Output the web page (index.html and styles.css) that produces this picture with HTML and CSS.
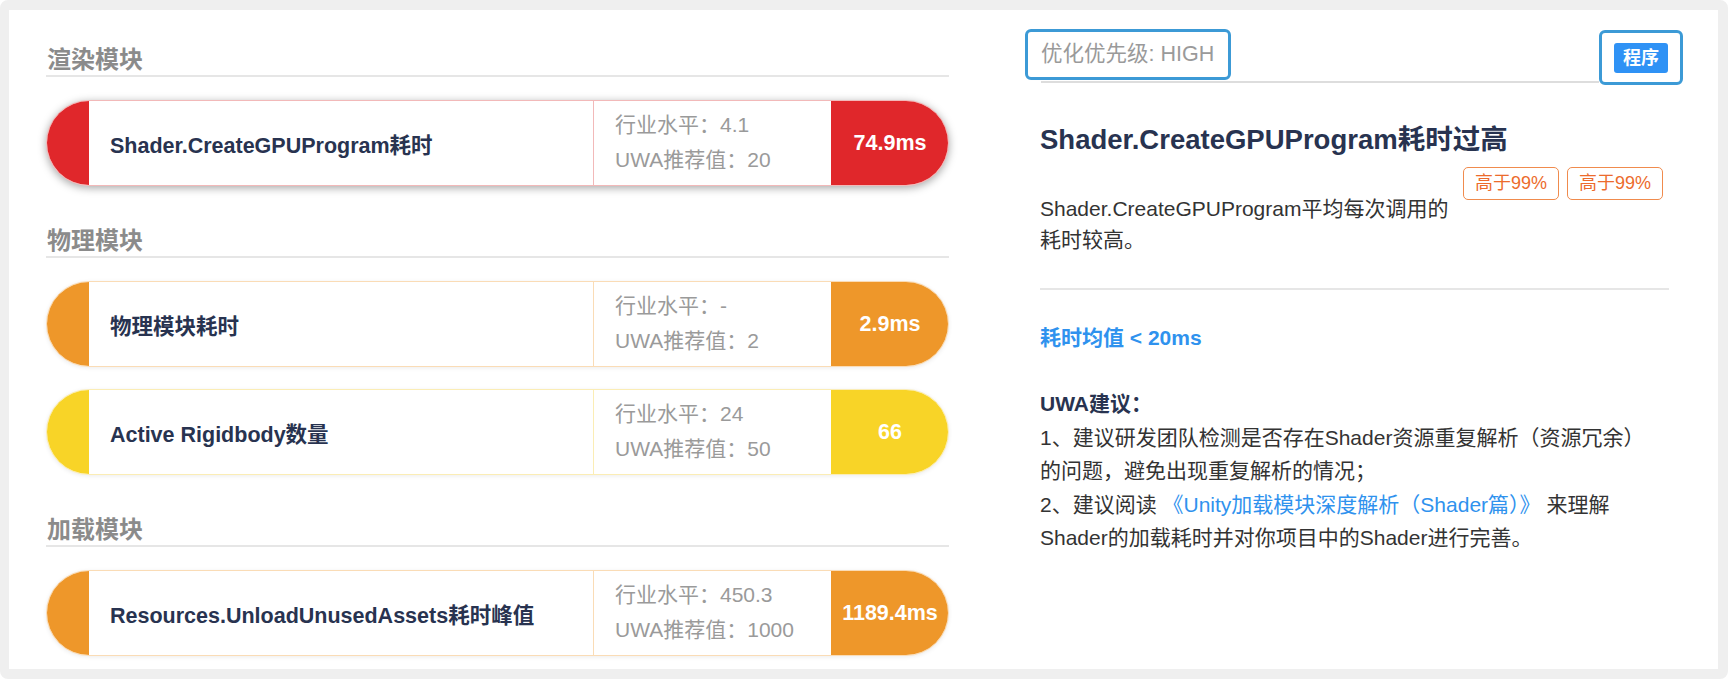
FILE: index.html
```html
<!DOCTYPE html>
<html lang="zh">
<head>
<meta charset="utf-8">
<title>UWA 性能报告</title>
<link rel="stylesheet" href="styles.css">
</head>
<body>
<div class="frame">
  <div class="card">
    <div class="left">
      <div class="sec-title">渲染模块</div>
      <div class="pill red shadowed">
        <div class="cap"></div>
        <div class="name">Shader.CreateGPUProgram耗时</div>
        <div class="metrics"><div>行业水平：4.1</div><div>UWA推荐值：20</div></div>
        <div class="value">74.9ms</div>
      </div>

      <div class="sec-title gap">物理模块</div>
      <div class="pill orange">
        <div class="cap"></div>
        <div class="name">物理模块耗时</div>
        <div class="metrics"><div>行业水平：-</div><div>UWA推荐值：2</div></div>
        <div class="value">2.9ms</div>
      </div>
      <div class="pill yellow next">
        <div class="cap"></div>
        <div class="name">Active Rigidbody数量</div>
        <div class="metrics"><div>行业水平：24</div><div>UWA推荐值：50</div></div>
        <div class="value">66</div>
      </div>

      <div class="sec-title gap">加载模块</div>
      <div class="pill orange">
        <div class="cap"></div>
        <div class="name">Resources.UnloadUnusedAssets耗时峰值</div>
        <div class="metrics"><div>行业水平：450.3</div><div>UWA推荐值：1000</div></div>
        <div class="value">1189.4ms</div>
      </div>
    </div>

    <div class="right">
      <div class="rhead">
        <div class="bar"><div class="prio">优化优先级: HIGH</div></div>
        <div class="catbox"><span class="cat">程序</span></div>
      </div>
      <div class="rbody">
        <h1 class="issue">Shader.CreateGPUProgram耗时过高</h1>
        <div class="summary">
          <p class="desc">Shader.CreateGPUProgram平均每次调用的耗时较高。</p>
          <div class="tags"><span class="tag">高于99%</span><span class="tag">高于99%</span></div>
        </div>
        <div class="divider"></div>
        <div class="target">耗时均值 &lt; 20ms</div>
        <div class="advice">
          <div class="adv-title">UWA建议：</div>
          <div>1、建议研发团队检测是否存在Shader资源重复解析（资源冗余）的问题，避免出现重复解析的情况；</div>
          <div>2、建议阅读 <span class="link">《Unity加载模块深度解析（Shader篇）》</span> 来理解Shader的加载耗时并对你项目中的Shader进行完善。</div>
        </div>
      </div>
    </div>
  </div>
</div>
</body>
</html>
```

FILE: styles.css
```css
* { box-sizing: border-box; }
html, body { margin: 0; padding: 0; background: #ffffff; }
body {
  font-family: "Liberation Sans", "Noto Sans CJK SC", sans-serif;
  color: #3a3a3a;
}
.frame {
  width: 1728px;
  height: 679px;
  border-style: solid;
  border-color: #efefef;
  border-width: 10px 10px 10px 9px;
  border-radius: 8px;
}
.card {
  display: flex;
  align-items: flex-start;
  background: #ffffff;
  height: 100%;
}
.left {
  width: 903px;
  margin-left: 37px;
  padding-top: 35px;
}
.sec-title {
  font-size: 24px;
  font-weight: bold;
  line-height: 30px;
  color: #8b8b8b;
  padding-left: 1px;
  border-bottom: 2px solid #e6e6e6;
  margin-bottom: 23px;
}
.sec-title.gap { margin-top: 40px; }
.pill {
  display: flex;
  height: 86px;
  border-radius: 43px;
  overflow: hidden;
  background: #ffffff;
  border: 1px solid var(--tint);
  box-shadow: 0 1px 4px rgba(0, 0, 0, 0.08);
}
.pill.next { margin-top: 22px; }
.pill.shadowed { box-shadow: 0 2px 8px rgba(0, 0, 0, 0.35); }
.red { --main: #e0272b; --tint: #f2b9b9; }
.orange { --main: #ee972a; --tint: #fadcb6; }
.yellow { --main: #f8d427; --tint: #fbedb5; }
.cap {
  width: 43px;
  margin: -1px 0 -1px -1px;
  background: var(--main);
}
.name {
  flex: 1;
  display: flex;
  align-items: center;
  padding-left: 21px;
  font-size: 21.5px;
  font-weight: bold;
  color: #283350;
  border-right: 1px solid var(--tint);
}
.metrics {
  width: 237px;
  padding: 6px 0 0 21px;
  font-size: 21px;
  line-height: 35px;
  color: #9a9a9a;
}
.value {
  width: 118px;
  margin: -1px -1px -1px 0;
  display: flex;
  align-items: center;
  justify-content: center;
  background: var(--main);
  color: #ffffff;
  font-size: 21.5px;
  font-weight: bold;
}

.right {
  width: 658px;
  margin-left: 76px;
  padding-top: 19px;
}
.rhead {
  display: flex;
  align-items: flex-start;
}
.bar {
  flex: 1;
  height: 54px;
  margin-left: 16px;
  border-bottom: 2px solid #dddddd;
}
.prio {
  width: 206px;
  height: 51px;
  margin-left: -16px;
  border: 3px solid #3c9ad6;
  border-radius: 6px;
  padding-left: 13px;
  font-size: 21.5px;
  line-height: 45px;
  color: #9a9a9a;
}
.catbox {
  width: 84px;
  height: 55px;
  margin-top: 1px;
  border: 3px solid #3c9ad6;
  border-radius: 6px;
  display: flex;
  align-items: center;
  justify-content: center;
}
.cat {
  display: inline-block;
  width: 54px;
  height: 30px;
  border-radius: 3px;
  background: #2f92f5;
  color: #ffffff;
  font-size: 18px;
  font-weight: bold;
  line-height: 30px;
  text-align: center;
}
.rbody {
  padding-left: 15px;
  width: 644px;
}
.issue {
  margin: 37px 0 0 0;
  font-size: 27.5px;
  line-height: 36px;
  font-weight: bold;
  color: #283350;
}
.summary {
  display: flex;
  align-items: flex-start;
  margin-top: 9px;
}
.desc {
  width: 420px;
  margin: 0;
  padding-top: 26px;
  font-size: 21px;
  line-height: 31px;
  color: #333333;
}
.tags {
  display: flex;
  gap: 8px;
  margin-left: 3px;
}
.tag {
  display: inline-block;
  height: 33px;
  padding: 0 11px;
  border: 1.5px solid #f08b4d;
  border-radius: 5px;
  color: #ec6b2c;
  font-size: 18px;
  line-height: 30px;
}
.divider {
  height: 2px;
  width: 629px;
  background: #e6e6e6;
  margin-top: 33px;
}
.target {
  margin-top: 31px;
  font-size: 21px;
  line-height: 33px;
  font-weight: bold;
  color: #2f92ee;
}
.advice {
  margin-top: 33px;
  width: 612px;
  font-size: 21px;
  line-height: 33.5px;
  color: #333333;
}
.adv-title {
  font-weight: bold;
  color: #283350;
}
.link { color: #2f92ee; }
```
